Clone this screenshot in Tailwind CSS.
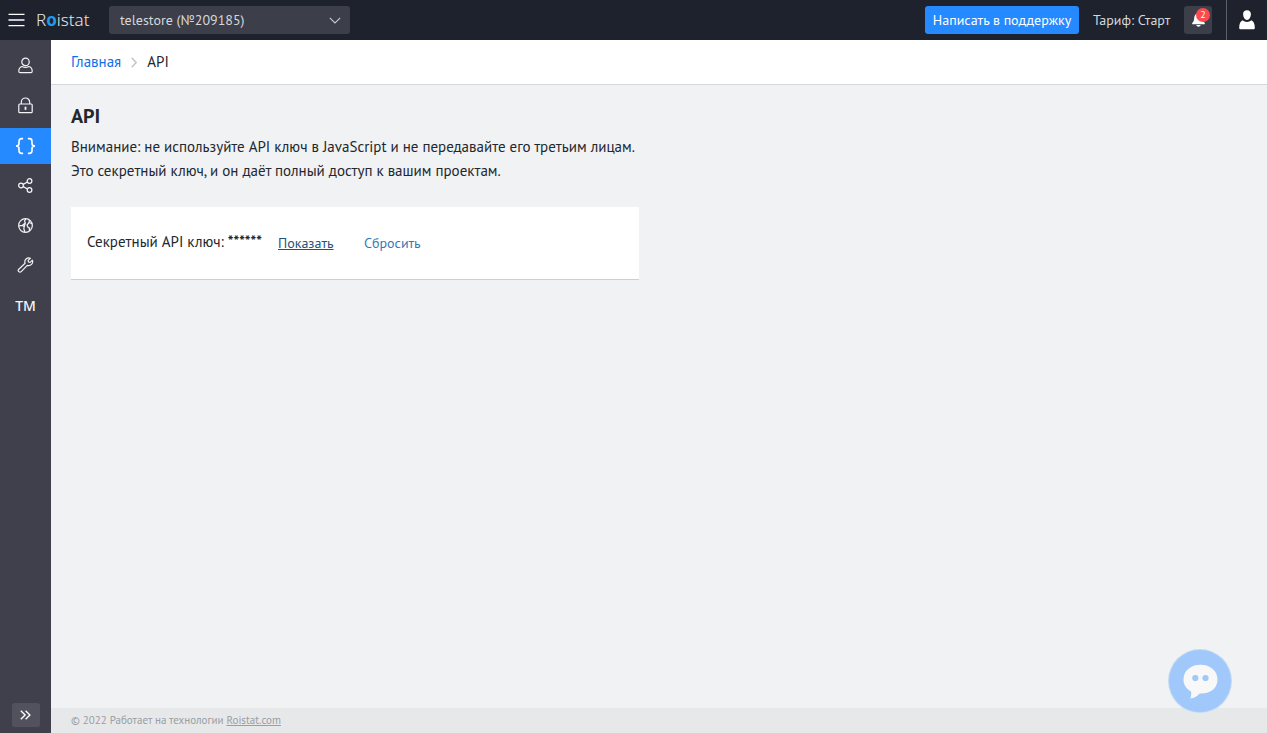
<!DOCTYPE html>
<html lang="ru">
<head>
<meta charset="utf-8">
<meta name="viewport" content="width=device-width, initial-scale=1">
<title>API — Roistat</title>
<script src="https://cdn.jsdelivr.net/npm/@tailwindcss/browser@4"></script>
</head>
<body class="flex min-h-screen flex-col bg-[#f0f2f4] font-['PT_Sans','Roboto','Noto_Sans',sans-serif] text-[15px] text-[#23272e]">
<header class="flex h-10 items-center bg-[#1e222d] text-sm text-[#d5d7db]">
  <button type="button" aria-label="Меню" class="ml-2 flex h-10 w-[18px] items-center">
    <svg class="h-[14px] w-[17px]" viewBox="0 0 17 14" fill="none" stroke="#fff" stroke-width="1.3" aria-hidden="true"><path d="M.5 1.4h16M.5 7h16M.5 12.6h16"/></svg>
  </button>
  <a href="#" class="ml-[10px] w-[55px] font-['Noto_Sans',sans-serif] text-[17px] leading-6 font-light text-[#e6e8eb]">R<span class="font-bold text-[#1e9be9]">o</span>istat</a>
  <div class="relative ml-[18px] w-[241px]">
    <select aria-label="Проект" class="h-7 w-full appearance-none rounded-[3px] bg-[#3c3f49] px-[11px] text-sm text-[#d5d7db]">
      <option>telestore (№209185)</option>
    </select>
    <svg class="pointer-events-none absolute top-[11px] right-[9px] h-[7px] w-3" viewBox="0 0 12 7" fill="none" stroke="#c9cbd0" stroke-width="1.1" aria-hidden="true"><path d="M.8.8 6 6 11.2.8"/></svg>
  </div>
  <button type="button" class="ml-auto h-7 w-[154px] rounded-[3px] bg-[#2589ff] text-sm whitespace-nowrap text-white">Написать в поддержку</button>
  <span class="ml-[14px] w-[77px] whitespace-nowrap">Тариф: Старт</span>
  <button type="button" aria-label="Уведомления: 2" class="relative ml-[14px] flex h-7 w-7 items-center justify-center rounded-[3px] bg-[#3c3f49]">
    <svg class="h-[14px] w-[13px]" viewBox="0 0 13 14" fill="#fff" aria-hidden="true"><path d="M6.500 0C9 .3 10.600 2 10.800 5c.1 2.500.6 3.700 2 5v1.300H.2V10c1.400-1.300 1.900-2.500 2-5C2.400 2 4 .3 6.500 0zM4.300 12.100h4.400c-.3 1.200-1.100 1.700-2.200 1.700s-1.900-.5-2.200-1.700z"/></svg>
    <span class="absolute top-[2px] right-[2px] flex h-[14px] w-[14px] items-center justify-center rounded-full bg-[#fa4b4f] text-[10px] leading-none text-white">2</span>
  </button>
  <button type="button" aria-label="Профиль" class="ml-[14px] flex h-10 w-[41px] items-center justify-center border-l border-[#5b5e68]">
    <svg class="h-5 w-4" viewBox="0 0 16 20" fill="#fff" aria-hidden="true"><path d="M8 .3c2.600 0 4.100 1.700 3.900 4.200C11.700 7.500 10.300 9.900 8 9.900S4.300 7.500 4.100 4.500C3.900 2 5.400.3 8 .3z"/><path d="M3.800 10.200C4.900 11.300 6.300 11.900 8 11.900s3.100-.6 4.200-1.700c2.400 1 3.600 3.300 3.600 7.500 0 1-.6 1.500-1.600 1.500H1.800c-1 0-1.600-.5-1.600-1.500 0-4.200 1.200-6.500 3.600-7.500z"/></svg>
  </button>
</header>
<div class="flex flex-1">
  <aside class="flex w-[51px] flex-col bg-[#3f404c] pt-2">
    <nav aria-label="Настройки" class="flex flex-col gap-1">
      <a href="#" aria-label="Профиль" class="flex h-9 items-center justify-center pb-[2px]"><svg class="h-[17px] w-[15px]" viewBox="0 0 15 17" fill="none" stroke="#f3f4f6" stroke-width="1.200"><circle cx="7.500" cy="4.900" r="3.700"/><path d="M4.300 9.500C2 9.900.8 11.700.8 14.200c0 1 .5 1.500 1.400 1.500h10.600c.9 0 1.400-.5 1.400-1.500 0-2.500-1.200-4.300-3.500-4.700-2 1.200-4.400 1.200-6.400 0z"/></svg></a>
      <a href="#" aria-label="Безопасность" class="flex h-9 items-center justify-center pb-[2px]"><svg class="h-[17px] w-[15px]" viewBox="0 0 15 17" fill="none" stroke="#f3f4f6" stroke-width="1.200"><rect x=".8" y="7" width="13.400" height="8.700" rx="1"/><path d="M3.300 6.900V5.200a4.200 4.200 0 0 1 8.400 0v1.700"/><path d="M7.500 9.700v3.200" stroke-width="1.800"/></svg></a>
      <a href="#" aria-label="API" aria-current="page" class="flex h-9 items-center justify-center bg-[#2589ff]"><svg class="h-[18px] w-[21px]" viewBox="0 0 22 18" fill="none" stroke="#fff" stroke-width="1.700"><path d="M8.500 1.300H7C5 1.300 4.200 2.100 4.200 4v2.400C4.200 8.200 3 9 1 9c2 0 3.200.8 3.200 2.600V14c0 1.900.8 2.700 2.800 2.700h1.500M13.500 1.300H15c2 0 2.800.8 2.800 2.700v2.400C17.800 8.200 19 9 21 9c-2 0-3.200.8-3.200 2.600V14c0 1.900-.8 2.700-2.800 2.700h-1.500"/></svg></a>
      <a href="#" aria-label="Интеграции" class="flex h-9 items-center justify-center pb-[2px]"><svg class="h-[15px] w-[15px]" viewBox="0 0 16 16" fill="none" stroke="#f3f4f6" stroke-width="1.300"><circle cx="3.200" cy="8" r="2.500"/><circle cx="12.300" cy="3.200" r="2.500"/><circle cx="12.300" cy="12.800" r="2.500"/><path d="m5.500 6.800 4.600-2.500M5.500 9.200l4.600 2.500"/></svg></a>
      <a href="#" aria-label="Домены" class="flex h-9 items-center justify-center pb-[2px]"><svg class="h-[15px] w-[15px]" viewBox="0 0 16 16" fill="none" stroke="#f3f4f6" stroke-width="1.300" stroke-linejoin="round"><circle cx="8" cy="8" r="7.300"/><path d="M8.200.8 7 3.200l.8 2.200-3 2.400-3.600.6M4.800 7.800l1.800 1.600-.4 2 1.200 3.600M7.800 5.400 6.600 9.400M15 6.200l-3.200-1.400-2.200 2.800 1.200 2.600 1.600.4-.4 3.200M11.800 4.800l.4-2.600"/></svg></a>
      <a href="#" aria-label="Инструменты" class="flex h-9 items-center justify-center pb-[2px]"><svg class="h-4 w-[17px]" viewBox="0 0 16 16" fill="none" stroke="#f3f4f6" stroke-width="1.200" stroke-linejoin="round"><path d="M12.900 1.200A4 4 0 0 0 7.600 6.300L1.300 12.200a1.600 1.600 0 0 0 2.400 2.400L9.800 8.400a4 4 0 0 0 5.100-5.200l-2.200 2.200-1.700-.4-.4-1.600z"/></svg></a>
      <a href="#" class="flex h-9 items-center justify-center font-['Noto_Sans',sans-serif] text-sm font-medium text-[#f3f4f6]">TM</a>
    </nav>
    <button type="button" aria-label="Развернуть" class="mx-auto mt-auto mb-[6px] flex h-6 w-7 items-center justify-center rounded-[3px] bg-[#51525d]"><svg class="h-[10px] w-[11px]" viewBox="0 0 11 10" fill="none" stroke="#fff" stroke-width="1.400"><path d="m.8.7 4.300 4.300L.8 9.300M5.600.7 9.900 5 5.600 9.300"/></svg></button>
  </aside>
  <div class="flex min-w-0 flex-1 flex-col">
    <nav aria-label="Навигация" class="flex h-[45px] items-center border-b border-[#d5d8dc] bg-white px-5">
      <a href="#" class="text-[#0f6fe8]">Главная</a>
      <svg class="mx-[10px] h-[11px] w-[6px]" viewBox="0 0 6 11" fill="none" stroke="#c3c6ce" stroke-width="1.500" aria-hidden="true"><path d="m.7.7 4.400 4.800L.7 10.300"/></svg>
      <span aria-current="page">API</span>
    </nav>
    <main class="flex-1 px-5 pt-[19px]">
      <h1 class="text-xl leading-6 font-bold">API</h1>
      <p class="mt-[7px] leading-6">Внимание: не используйте API ключ в JavaScript и не передавайте его третьим лицам.<br>Это секретный ключ, и он даёт полный доступ к вашим проектам.</p>
      <section class="mt-6 flex h-[73px] max-w-[568px] items-center border-b border-[#cbd0d5] bg-white px-4">
        <span class="w-[191px] pb-[2px] whitespace-nowrap">Секретный API ключ: <b>******</b></span>
        <a href="#" class="w-[86px] text-sm text-[#23527c] underline">Показать</a>
        <a href="#" class="text-sm text-[#337ab7]">Сбросить</a>
      </section>
    </main>
    <footer class="flex h-[25px] items-center bg-[#e6e8ea] px-5 text-[11px] text-[#999ea3]">© 2022 Работает на технологии&nbsp;<a href="#" class="underline">Roistat.com</a></footer>
  </div>
</div>
<button type="button" aria-label="Открыть чат" class="fixed right-9 bottom-[21px] flex h-[62px] w-[62px] items-center justify-center rounded-full bg-[#a0c8fa] ring-1 ring-[#c5dbf4]">
  <svg class="h-[35px] w-[35px]" viewBox="0 0 35 35" aria-hidden="true"><path fill="#f8f8f8" d="M17.500.8C27.500.8 34.500 7 34.500 15.500S28 29.500 18 29.500h-1.500c-2.200 3-5.500 4.700-9.200 5 .9-2.200 1.100-4.600.8-7C3.300 25 .5 20.800.5 15.500.5 7 7.500.8 17.500.8z"/><circle cx="12.300" cy="14" r="3.100" fill="#a0c8fa"/><circle cx="22.500" cy="14" r="3.100" fill="#a0c8fa"/></svg>
</button>
</body>
</html>
